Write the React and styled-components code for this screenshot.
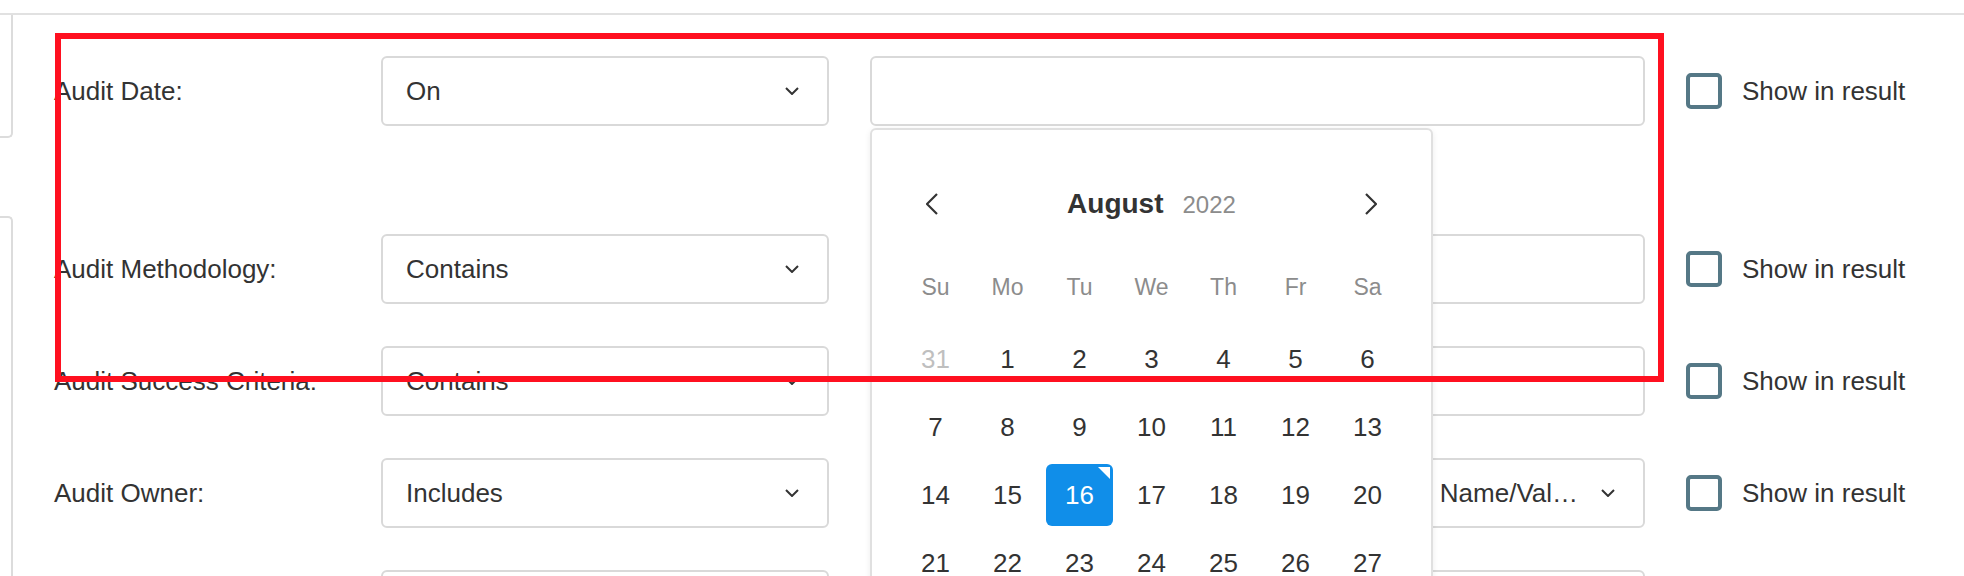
import React from "react";
import styled, { createGlobalStyle } from "styled-components";

const GlobalStyle = createGlobalStyle`
  html, body {
    margin: 0;
    padding: 0;
    height: 576px;
    overflow: hidden;
    background: #fff;
    font-family: "Liberation Sans", Arial, Helvetica, sans-serif;
    color: #333;
  }
`;

const rows = [
  { label: "Audit Date:", op: "On", kind: "date", extra: true },
  { label: "Audit Methodology:", op: "Contains", kind: "text" },
  { label: "Audit Success Criteria:", op: "Contains", kind: "text" },
  {
    label: "Audit Owner:",
    op: "Includes",
    kind: "select",
    value: "Search Owner by Username or Group Account Name/Value Pair",
  },
  { label: "Audit Status:", op: "Includes", kind: "select", value: "" },
];

const weeks = [
  [31, 1, 2, 3, 4, 5, 6],
  [7, 8, 9, 10, 11, 12, 13],
  [14, 15, 16, 17, 18, 19, 20],
  [21, 22, 23, 24, 25, 26, 27],
  [28, 29, 30, 31, 1, 2, 3],
  [4, 5, 6, 7, 8, 9, 10],
];

const Chevron = () => (
  <svg width="14" height="8" viewBox="0 0 14 8" fill="none">
    <path d="M1 1l6 6 6-6" stroke="#333" strokeWidth="2" />
  </svg>
);

const Arrow = ({ dir }) => (
  <svg width="12" height="22" viewBox="0 0 12 22" fill="none">
    <path
      d={dir === "left" ? "M11 1L1 11l10 10" : "M1 1l10 10L1 21"}
      stroke="#333"
      strokeWidth="2.2"
    />
  </svg>
);

const Calendar = () => (
  <Popup>
    <CalHeader>
      <NavButton>
        <Arrow dir="left" />
      </NavButton>
      <MonthTitle>
        <strong>August</strong>
        <span>2022</span>
      </MonthTitle>
      <NavButton>
        <Arrow dir="right" />
      </NavButton>
    </CalHeader>
    <DayGrid>
      {["Su", "Mo", "Tu", "We", "Th", "Fr", "Sa"].map((d) => (
        <WeekDay key={d}>{d}</WeekDay>
      ))}
    </DayGrid>
    <DateGrid>
      {weeks.map((week, wi) =>
        week.map((day, di) => {
          const outside = (wi === 0 && day > 7) || (wi >= 4 && day < 20 && !(wi === 4 && di < 4));
          const selected = wi === 2 && day === 16;
          return (
            <DateCell key={`${wi}-${di}`}>
              <DateInner $outside={outside} $selected={selected}>
                {day}
              </DateInner>
            </DateCell>
          );
        })
      )}
    </DateGrid>
  </Popup>
);

const App = () => {
  return (
    <Page>
      <GlobalStyle />
      <TopBar />
      <Body>
        <Sidebar>
          <SideCard $height={121} />
          <SideCard $grow />
        </Sidebar>
        <Form>
          {rows.map((row) => (
            <Row key={row.label} $extra={row.extra}>
              <Label>{row.label}</Label>
              <Select>
                <SelectText>{row.op}</SelectText>
                <Chevron />
              </Select>
              <ValueCell>
                {row.kind === "select" ? (
                  <Select>
                    <SelectText>{row.value}</SelectText>
                    <Chevron />
                  </Select>
                ) : (
                  <Input />
                )}
                {row.kind === "date" && <Calendar />}
              </ValueCell>
              <CheckLabel>
                <CheckBox />
                <span>Show in result</span>
              </CheckLabel>
            </Row>
          ))}
        </Form>
      </Body>
      <Annotation />
    </Page>
  );
};

export default App;

const Page = styled.div`
  position: relative;
  width: 1964px;
  height: 576px;
  overflow: hidden;
`;

const TopBar = styled.div`
  height: 13px;
  border-bottom: 2px solid #e1e1e1;
`;

const Body = styled.div`
  display: flex;
  height: 561px;
`;

const Sidebar = styled.div`
  width: 13px;
  display: flex;
  flex-direction: column;
  gap: 78px;
  flex-shrink: 0;
`;

const SideCard = styled.div`
  height: ${(p) => (p.$height ? `${p.$height}px` : "auto")};
  flex: ${(p) => (p.$grow ? 1 : "none")};
  border-right: 2px solid #dcdcdc;
  border-bottom: ${(p) => (p.$grow ? "none" : "2px solid #dcdcdc")};
  border-top: ${(p) => (p.$grow ? "2px solid #dcdcdc" : "none")};
  border-radius: ${(p) => (p.$grow ? "0 5px 0 0" : "0 0 5px 0")};
`;

const Form = styled.div`
  flex: 1;
  padding: 41px 0 0 41px;
  display: flex;
  flex-direction: column;
  gap: 42px;
`;

const Row = styled.div`
  display: grid;
  grid-template-columns: 286px 448px 775px auto;
  column-gap: 41px;
  align-items: center;
  height: 70px;
  flex-shrink: 0;
  margin-bottom: ${(p) => (p.$extra ? "66px" : "0")};
`;

const Label = styled.div`
  font-size: 26px;
  color: #333;
  white-space: nowrap;
`;

const Select = styled.div`
  box-sizing: border-box;
  height: 70px;
  display: flex;
  align-items: center;
  gap: 20px;
  padding: 0 28px 0 23px;
  border: 2px solid #d9d9d9;
  border-radius: 6px;
  background: #fff;
  font-size: 26px;
  color: #333;

  svg {
    flex-shrink: 0;
  }
`;

const SelectText = styled.span`
  flex: 1;
  min-width: 0;
  white-space: nowrap;
  overflow: hidden;
  text-overflow: ellipsis;
`;

const ValueCell = styled.div`
  position: relative;
`;

const Input = styled.div`
  box-sizing: border-box;
  height: 70px;
  border: 2px solid #d9d9d9;
  border-radius: 6px;
  background: #fff;
`;

const CheckLabel = styled.label`
  display: flex;
  align-items: center;
  gap: 20px;
  font-size: 26px;
  color: #333;
  white-space: nowrap;
`;

const CheckBox = styled.span`
  box-sizing: border-box;
  width: 36px;
  height: 36px;
  border: 4px solid #557886;
  border-radius: 5px;
`;

const Popup = styled.div`
  position: absolute;
  top: calc(100% + 2px);
  left: 0;
  z-index: 5;
  box-sizing: border-box;
  width: 563px;
  height: 520px;
  padding: 24px 26px 0;
  background: #fff;
  border: 2px solid #e0e0e0;
  border-radius: 6px;
  box-shadow: 0 2px 6px rgba(0, 0, 0, 0.08);
`;

const CalHeader = styled.div`
  height: 100px;
  display: flex;
  align-items: center;
  justify-content: space-between;
  padding: 0 22px;
`;

const NavButton = styled.span`
  width: 24px;
  height: 24px;
  display: flex;
  align-items: center;
  justify-content: center;
`;

const MonthTitle = styled.div`
  display: flex;
  align-items: baseline;
  gap: 19px;

  strong {
    font-size: 28px;
    font-weight: bold;
    color: #333;
  }

  span {
    font-size: 24px;
    color: #8c8c8c;
  }
`;

const DayGrid = styled.div`
  display: grid;
  grid-template-columns: repeat(7, 72px);
  justify-content: center;
  height: 66px;
  align-items: center;
  margin-bottom: 5px;
`;

const WeekDay = styled.div`
  text-align: center;
  font-size: 23px;
  color: #8c8c8c;
`;

const DateGrid = styled.div`
  display: grid;
  grid-template-columns: repeat(7, 72px);
  grid-auto-rows: 68px;
  justify-content: center;
`;

const DateCell = styled.div`
  display: flex;
  align-items: center;
  justify-content: center;
`;

const DateInner = styled.div`
  position: relative;
  width: 67px;
  height: 62px;
  border-radius: 6px;
  display: flex;
  align-items: center;
  justify-content: center;
  font-size: 26px;
  color: ${(p) => (p.$selected ? "#fff" : p.$outside ? "#bfbfbf" : "#333")};
  background: ${(p) => (p.$selected ? "#108ee9" : "transparent")};

  &::after {
    content: "";
    display: ${(p) => (p.$selected ? "block" : "none")};
    position: absolute;
    top: 3px;
    right: 3px;
    border-top: 12px solid #fff;
    border-left: 12px solid transparent;
  }
`;

const Annotation = styled.div`
  position: absolute;
  left: 55px;
  top: 33px;
  width: 1609px;
  height: 349px;
  box-sizing: border-box;
  border: 6px solid #ff1020;
  pointer-events: none;
  z-index: 10;
`;
